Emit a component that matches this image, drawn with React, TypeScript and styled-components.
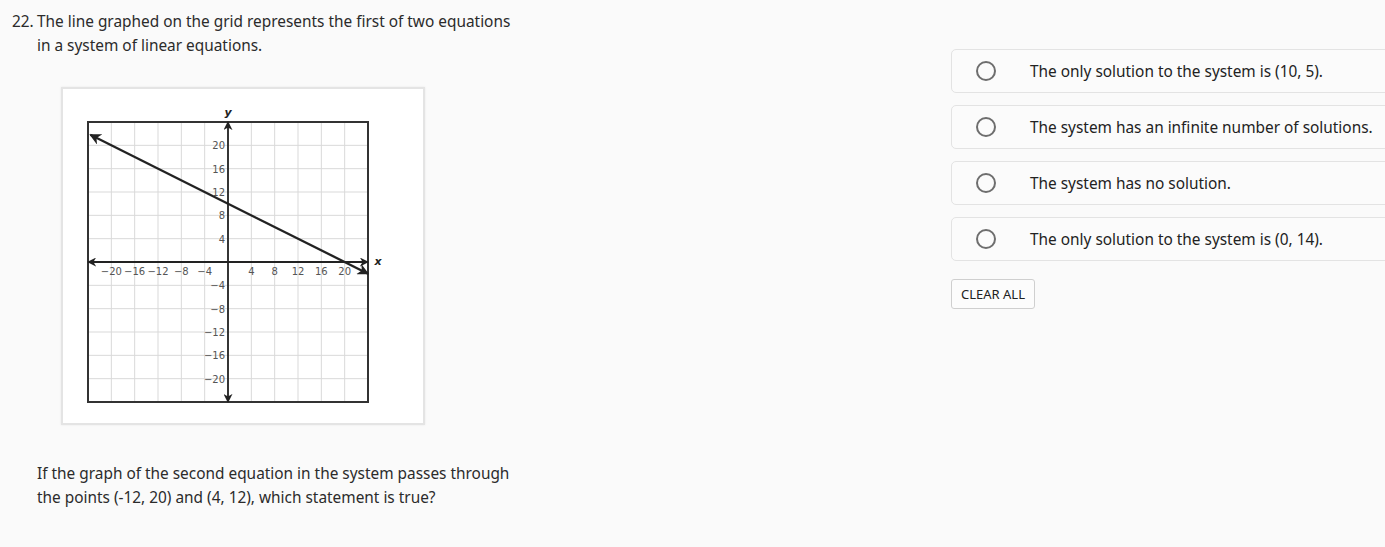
import React from "react";
import styled, { createGlobalStyle } from "styled-components";

const GlobalStyle = createGlobalStyle`
  html, body {
    margin: 0;
    padding: 0;
    background: #fafafa;
    overflow: hidden;
  }
  body {
    font-family: "Noto Sans", "Open Sans", sans-serif;
    color: #2b2b2b;
  }
`;

const Page = styled.div`
  display: grid;
  grid-template-columns: 951px 1fr;
  width: 1385px;
  height: 547px;
  overflow: hidden;
`;

const QuestionColumn = styled.div`
  padding: 10px 0 0 12px;
`;

const Stem = styled.div`
  display: flex;
  font-size: 15.4px;
  line-height: 24px;
  width: 503px;
`;

const Number = styled.span`
  width: 25px;
  flex-shrink: 0;
`;

const GraphCard = styled.div`
  width: 360px;
  height: 334px;
  margin: 29px 0 0 49px;
  background: #fff;
  border: 2px solid #e4e4e4;
  box-shadow: 0 0 2px rgba(0, 0, 0, 0.08);
`;

const Prompt = styled.p`
  margin: 37px 0 0 25px;
  font-size: 15.4px;
  line-height: 24px;
  width: 480px;
`;

const AnswerColumn = styled.div`
  padding-top: 49px;
  display: flex;
  flex-direction: column;
  gap: 12px;
`;

const Choice = styled.label`
  display: flex;
  align-items: center;
  width: 480px;
  height: 42px;
  border: 1px solid #e3e3e3;
  border-radius: 5px;
  background: #fbfbfb;
  font-size: 15.4px;
  color: #222;
  cursor: pointer;
`;

const Radio = styled.span`
  width: 16px;
  height: 16px;
  border: 2px solid #6e6e6e;
  border-radius: 50%;
  margin: 0 34px 0 24px;
  flex-shrink: 0;
`;

const ClearButton = styled.button`
  align-self: flex-start;
  margin-top: 6px;
  height: 30px;
  padding: 0 9px;
  border: 1px solid #cfcfcf;
  border-radius: 3px;
  background: #fcfcfc;
  font-family: "Noto Sans", "Open Sans", sans-serif;
  font-size: 13px;
  color: #222;
`;

const U = 140 / 24;
const CX = 165;
const CY = 173;
const px = (x: number) => CX + x * U;
const py = (y: number) => CY - y * U;

const ticks = [-24, -20, -16, -12, -8, -4, 0, 4, 8, 12, 16, 20, 24];
const labels = [-20, -16, -12, -8, -4, 4, 8, 12, 16, 20];
const fmt = (n: number) => (n < 0 ? `\u2212${-n}` : `${n}`);

const Graph: React.FC = () => (
  <svg width="360" height="334" viewBox="0 0 360 334">
    <defs>
      <marker
        id="ah"
        viewBox="0 0 10 10"
        refX="9"
        refY="5"
        markerWidth="5"
        markerHeight="5"
        orient="auto-start-reverse"
      >
        <path d="M0 0 L10 5 L0 10 L3 5 Z" fill="#222" />
      </marker>
    </defs>
    {ticks.map((t) => (
      <g key={t}>
        <line x1={px(t)} y1={py(24)} x2={px(t)} y2={py(-24)} stroke="#d9d9d9" strokeWidth="1" />
        <line x1={px(-24)} y1={py(t)} x2={px(24)} y2={py(t)} stroke="#d9d9d9" strokeWidth="1" />
      </g>
    ))}
    <rect x={px(-24)} y={py(24)} width={280} height={280} fill="none" stroke="#333" strokeWidth="2" />
    <line x1={px(-24)} y1={CY} x2={px(24)} y2={CY} stroke="#222" strokeWidth="1.8" markerStart="url(#ah)" markerEnd="url(#ah)" />
    <line x1={CX} y1={py(24)} x2={CX} y2={py(-24)} stroke="#222" strokeWidth="1.8" markerStart="url(#ah)" markerEnd="url(#ah)" />
    <line
      x1={px(-23.6)}
      y1={py(21.8)}
      x2={px(24)}
      y2={py(-2)}
      stroke="#222"
      strokeWidth="2.3"
      markerStart="url(#ah)"
      markerEnd="url(#ah)"
    />
    <g fontFamily="'DejaVu Sans', Verdana, sans-serif" fontSize="10" fill="#555">
      {labels.map((l) => (
        <text key={`x${l}`} x={px(l)} y={CY + 13} textAnchor="middle">
          {fmt(l)}
        </text>
      ))}
      {labels.map((l) => (
        <text key={`y${l}`} x={CX - 3} y={py(l) + 4} textAnchor="end">
          {fmt(l)}
        </text>
      ))}
    </g>
    <text x={CX} y={27} textAnchor="middle" fontFamily="'DejaVu Sans', sans-serif" fontSize="11" fontStyle="italic" fontWeight="bold" fill="#222">
      y
    </text>
    <text x={px(24) + 10} y={CY + 3} textAnchor="middle" fontFamily="'DejaVu Sans', sans-serif" fontSize="11" fontStyle="italic" fontWeight="bold" fill="#222">
      x
    </text>
  </svg>
);

const choices = [
  "The only solution to the system is (10, 5).",
  "The system has an infinite number of solutions.",
  "The system has no solution.",
  "The only solution to the system is (0, 14).",
];

const App: React.FC = () => (
  <>
    <GlobalStyle />
    <Page>
      <QuestionColumn>
        <Stem>
          <Number>22.</Number>
          <span>
            The line graphed on the grid represents the first of two equations
            in a system of linear equations.
          </span>
        </Stem>
        <GraphCard>
          <Graph />
        </GraphCard>
        <Prompt>
          If the graph of the second equation in the system passes through the
          points (-12, 20) and (4, 12), which statement is true?
        </Prompt>
      </QuestionColumn>
      <AnswerColumn>
        {choices.map((c) => (
          <Choice key={c}>
            <Radio />
            {c}
          </Choice>
        ))}
        <ClearButton>CLEAR ALL</ClearButton>
      </AnswerColumn>
    </Page>
  </>
);

export default App;
